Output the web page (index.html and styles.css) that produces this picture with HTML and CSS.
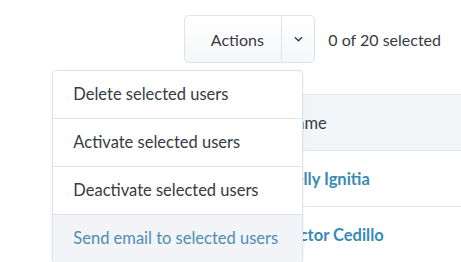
FILE: index.html
```html
<!DOCTYPE html>
<html lang="en">

<head>
    <meta charset="UTF-8" />
    <meta name="viewport" content="width=device-width, initial-scale=1.0" />
    <title>Users</title>
    <link rel="stylesheet" href="styles.css">
</head>

<body>
    <!-- Toolbar -->
    <div class="toolbar">
        <div class="actions">
            <button class="actions-main">Actions</button>
            <button class="actions-toggle" title="More">
                <svg viewBox="0 0 10 6">
                    <path d="M1 1 5 5 9 1" />
                </svg>
            </button>

            <!-- Dropdown -->
            <ul class="menu">
                <li>Delete selected users</li>
                <li>Activate selected users</li>
                <li>Deactivate selected users</li>
                <li class="hover">Send email to selected users</li>
            </ul>
        </div>
        <span class="count">0 of 20 selected</span>
    </div>

    <!-- Table -->
    <table class="users">
        <thead>
            <tr>
                <th class="check"></th>
                <th>Name</th>
            </tr>
        </thead>
        <tbody>
            <tr>
                <td class="check"></td>
                <td><a href="#">Kelly Ignitia</a></td>
            </tr>
            <tr>
                <td class="check"></td>
                <td><a href="#">Victor Cedillo</a></td>
            </tr>
        </tbody>
    </table>
</body>

</html>
```

FILE: styles.css
```css
html,
body {
    margin: 0;
    padding: 0;
    font-family: 'Lato', sans-serif;
    color: #363a45;
    background: white;
    overflow: hidden;
}

/* Toolbar */
.toolbar {
    display: flex;
    justify-content: flex-end;
    align-items: center;
    gap: 13px;
    padding: 15px 20px 0 0;
}

.actions {
    position: relative;
    display: flex;
    height: 48px;
    border: 1px solid #dfe2e8;
    border-radius: 5px;
    background: linear-gradient(#ffffff, #f6f7f9);
    box-sizing: border-box;
}

.actions button {
    border: none;
    background: none;
    font-family: inherit;
    font-size: 16px;
    color: #363a45;
    cursor: pointer;
    padding: 0;
}

.actions-main {
    width: 96px;
    padding-left: 8px !important;
}

.actions-toggle {
    width: 33px;
    border-left: 1px solid #dfe2e8 !important;
    display: flex;
    justify-content: center;
    align-items: center;
}

.actions-toggle svg {
    width: 9px;
    height: 6px;
    fill: none;
    stroke: #2c3550;
    stroke-width: 1.4;
}

.count {
    font-size: 16px;
    color: #363a45;
}

/* Dropdown */
.menu {
    position: absolute;
    top: 54px;
    left: -133px;
    width: 249px;
    margin: 0;
    padding: 0;
    list-style: none;
    background: white;
    border: 1px solid #dfe1e8;
    border-radius: 4px;
    box-shadow: 0 2px 4px rgba(0, 0, 0, 0.06);
    overflow: hidden;
    z-index: 10;
}

.menu li {
    height: 47px;
    line-height: 46px;
    padding-left: 20px;
    font-size: 16.5px;
    border-bottom: 1px solid #dfe1e8;
}

.menu li:last-child {
    border-bottom: none;
}

.menu li.hover {
    background: #f3f4f8;
    color: #4d8db3;
}

/* Table */
.users {
    width: calc(100% - 220px);
    margin: 31px 0 0 220px;
    border-collapse: collapse;
}

.users th,
.users td {
    height: 55px;
    text-align: left;
    padding: 0;
    font-size: 16.5px;
    border-top: 1px solid #e4e7ec;
}

.users th {
    background: #f3f6f9;
    font-weight: normal;
    border-bottom: 1px solid #e4e7ec;
}

.users .check {
    width: 64px;
}

.users a {
    color: #3a8ab3;
    font-weight: bold;
    text-decoration: none;
}
```
